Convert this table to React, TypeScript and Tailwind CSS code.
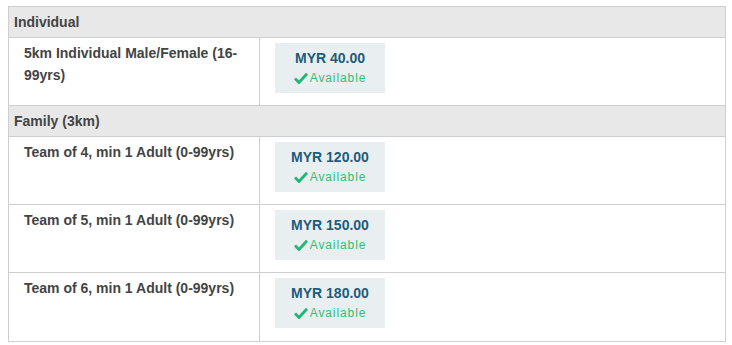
const groups = [
  {
    name: "Individual",
    items: [{ label: "5km Individual Male/Female (16-99yrs)", price: "MYR 40.00" }],
  },
  {
    name: "Family (3km)",
    items: [
      { label: "Team of 4, min 1 Adult (0-99yrs)", price: "MYR 120.00" },
      { label: "Team of 5, min 1 Adult (0-99yrs)", price: "MYR 150.00" },
      { label: "Team of 6, min 1 Adult (0-99yrs)", price: "MYR 180.00" },
    ],
  },
];

const Check = () => (
  <svg width="14" height="12" viewBox="0 0 14 12" className="mr-[2px]">
    <path d="M1 6.5 L5 10.5 L13 1.8" fill="none" stroke="#22b573" strokeWidth="2.8" strokeLinejoin="miter" />
  </svg>
);

export default function App() {
  return (
    <div className="bg-white w-[732px] h-[345px] pt-[6px] pl-[8px] font-['Liberation_Sans',Arial,sans-serif]">
      <div className="w-[718px] border border-[#cfcfcf]">
        {groups.map((g) => (
          <div key={g.name}>
            <div className="h-[31px] bg-[#e8e8e8] border-b border-[#cfcfcf] pl-[5px] flex items-center text-[14px] font-bold text-[#444]">
              {g.name}
            </div>
            {g.items.map((it, i) => (
              <div
                key={it.label}
                className={`flex h-[68px] ${i < g.items.length - 1 || g.name === "Individual" ? "border-b border-[#cfcfcf]" : ""}`}
              >
                <div className="w-[251px] border-r border-[#cfcfcf] pl-[15px] pr-[12px] pt-[4px] text-[14px] leading-[22px] font-bold text-[#444]">
                  {it.label}
                </div>
                <div className="pl-[15px] pt-[5px]">
                  <div className="w-[110px] h-[50px] bg-[#e9eff1] flex flex-col items-center pt-[6px]">
                    <div className="text-[14px] font-bold text-[#1c5c7c] leading-[19px]">{it.price}</div>
                    <div className="flex items-center text-[12px] text-[#2fbf71] tracking-[0.9px] leading-[18px] mt-[1px]">
                      <Check />
                      Available
                    </div>
                  </div>
                </div>
              </div>
            ))}
          </div>
        ))}
      </div>
    </div>
  );
}
